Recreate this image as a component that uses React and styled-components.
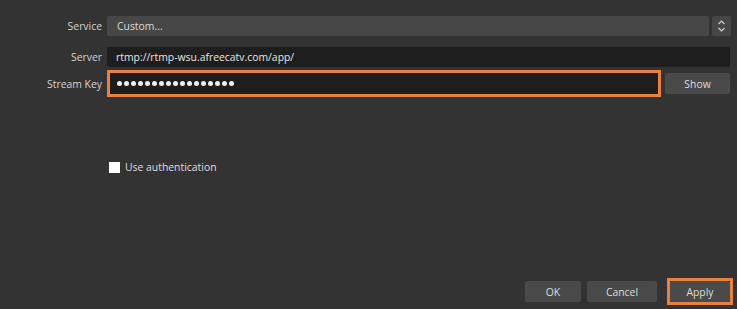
import React from "react";
import styled, { createGlobalStyle } from "styled-components";

const Global = createGlobalStyle`
  html, body { margin: 0; padding: 0; background: #333333; }
  body { font-family: "Open Sans", "Noto Sans", sans-serif; }
  #root { width: 737px; height: 309px; }
`;

const Page = styled.div`
  width: 737px;
  height: 309px;
  box-sizing: border-box;
  background: #333333;
  display: flex;
  flex-direction: column;
  padding: 16px 7px 4px 0;
  color: #dedede;
  font-size: 10.4px;
`;

const Form = styled.div`
  display: grid;
  grid-template-columns: 102px 1fr;
  column-gap: 5px;
  align-items: center;
`;

const Label = styled.div`
  text-align: right;
  color: #d4d4d4;
  margin-top: ${(p) => p.$mt || 0}px;
`;

const Field = styled.div`
  display: flex;
  align-items: center;
  gap: ${(p) => p.$gap || 0}px;
  margin-top: ${(p) => p.$mt || 0}px;
`;

const ComboBox = styled.div`
  flex: 1;
  height: 20px;
  background: #474747;
  border-radius: 2px;
  display: flex;
  align-items: center;
  padding-left: 10px;
  color: #dcdcdc;
`;

const Spin = styled.div`
  width: 19px;
  height: 20px;
  margin-left: 3px;
  margin-right: -1px;
  background: #474747;
  border-radius: 2px;
  display: flex;
  align-items: center;
  justify-content: center;
`;

const TextInput = styled.div`
  flex: 1;
  height: 20px;
  background: #1e1e1e;
  border-radius: 2px;
  display: flex;
  align-items: center;
  padding-left: 9px;
  color: #e6e6e6;
`;

const Highlight = styled.div`
  flex: 1;
  height: 27px;
  box-sizing: border-box;
  border: 3px solid #e9803d;
  background: #1e1e1e;
  display: flex;
  align-items: center;
  padding-left: 7px;
`;

const Dots = styled.div`
  display: flex;
  gap: 2px;
`;

const Dot = styled.span`
  width: 5px;
  height: 5px;
  border-radius: 50%;
  background: #f0f0f0;
`;

const Button = styled.div`
  width: ${(p) => p.$w}px;
  height: 21px;
  background: #4a4a4a;
  border-radius: 2px;
  display: flex;
  align-items: center;
  justify-content: center;
  color: #dcdcdc;
`;

const CheckRow = styled.div`
  display: flex;
  align-items: center;
  gap: 5px;
  margin: 63px 0 0 109px;
`;

const Box = styled.span`
  width: 11px;
  height: 11px;
  background: #ffffff;
`;

const Footer = styled.div`
  margin-top: auto;
  display: flex;
  justify-content: flex-end;
  align-items: center;
  gap: 6px;
  margin-right: -3px;
`;

const OrangeFrame = styled.div`
  border: 3px solid #e9803d;
  margin-left: 4px;
  display: flex;
`;

export default function App() {
  return (
    <Page>
      <Global />
      <Form>
        <Label>Service</Label>
        <Field>
          <ComboBox>Custom...</ComboBox>
          <Spin>
            <svg width="9" height="14" viewBox="0 0 9 14" fill="none" stroke="#cfcfcf" strokeWidth="1.2">
              <path d="M1.5 5 L4.5 2 L7.5 5" />
              <path d="M1.5 9 L4.5 12 L7.5 9" />
            </svg>
          </Spin>
        </Field>
        <Label $mt={11}>Server</Label>
        <Field $mt={11}>
          <TextInput>rtmp://rtmp-wsu.afreecatv.com/app/</TextInput>
        </Field>
        <Label $mt={3}>Stream Key</Label>
        <Field $mt={3} $gap={4}>
          <Highlight>
            <Dots>
              {Array.from({ length: 17 }).map((_, i) => (
                <Dot key={i} />
              ))}
            </Dots>
          </Highlight>
          <Button $w={65}>Show</Button>
        </Field>
      </Form>
      <CheckRow>
        <Box />
        <span>Use authentication</span>
      </CheckRow>
      <Footer>
        <Button $w={56}>OK</Button>
        <Button $w={70}>Cancel</Button>
        <OrangeFrame>
          <Button $w={60}>Apply</Button>
        </OrangeFrame>
      </Footer>
    </Page>
  );
}
